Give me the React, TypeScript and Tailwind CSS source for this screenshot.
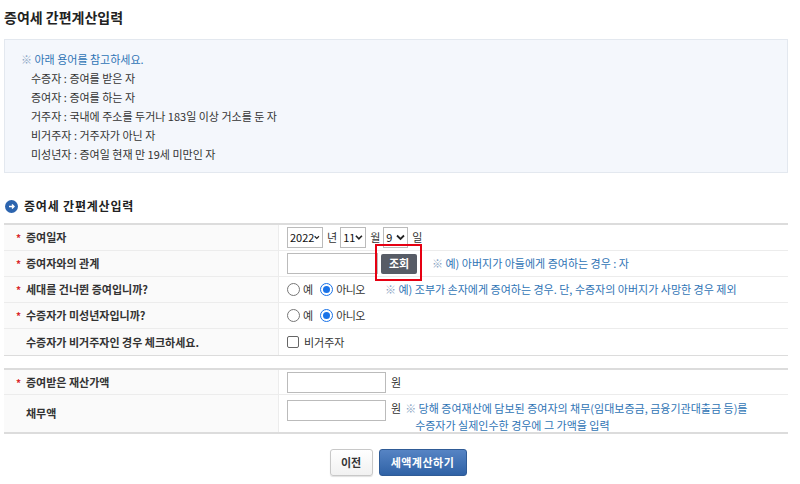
import React from 'react';

const FONT = '"Noto Sans CJK KR", "Noto Sans", sans-serif';

const TERMS: [string, string][] = [
  ['수증자', '증여를 받은 자'],
  ['증여자', '증여를 하는 자'],
  ['거주자', '국내에 주소를 두거나 183일 이상 거소를 둔 자'],
  ['비거주자', '거주자가 아닌 자'],
  ['미성년자', '증여일 현재 만 19세 미만인 자'],
];

function Star() {
  return <span className="text-[#d9262c] text-[10px] w-[9px] inline-block">*</span>;
}

function Label({ req, children }: { req?: boolean; children: React.ReactNode }) {
  return (
    <div className="w-[275px] shrink-0 bg-[#fafafa] border-r border-[#ececec] flex items-center pl-[12px] font-bold text-[11px] text-[#333]">
      {req ? <Star /> : <span className="w-[9px] inline-block" />}
      <span className="ml-[1px]">{children}</span>
    </div>
  );
}

function Select({ value, w }: { value: string; w: string }) {
  return (
    <div className={`${w} h-[21px] border border-[#bbb] bg-white flex items-center justify-between pl-[2px] pr-[2px] text-[11px] text-[#111]`}>
      <span>{value}</span>
      <svg width="9" height="7" viewBox="0 0 9 7">
        <path d="M1 1.5 L4.5 5 L8 1.5" stroke="#222" strokeWidth="1.8" fill="none" />
      </svg>
    </div>
  );
}

function Radio({ checked }: { checked?: boolean }) {
  return checked ? (
    <span className="w-[13px] h-[13px] rounded-full border border-[#1a73e8] flex items-center justify-center bg-white">
      <span className="w-[7px] h-[7px] rounded-full bg-[#1a73e8]" />
    </span>
  ) : (
    <span className="w-[13px] h-[13px] rounded-full border border-[#777] bg-white" />
  );
}

function YesNo() {
  return (
    <div className="flex items-center text-[11px] text-[#333]">
      <Radio />
      <span className="ml-[3px]">예</span>
      <span className="ml-[7px]"><Radio checked /></span>
      <span className="ml-[3px] tracking-[-0.5px]">아니오</span>
    </div>
  );
}

function Row({ children, h = 'h-[26px]', last }: { children: React.ReactNode; h?: string; last?: boolean }) {
  return <div className={`flex ${h} ${last ? '' : 'border-b border-[#ececec]'}`}>{children}</div>;
}

export default function App() {
  return (
    <div className="w-[800px] h-[484px] bg-white px-[4px] pt-[7px] text-[#333]" style={{ fontFamily: FONT }}>
      <h1 className="text-[14px] font-bold text-[#222] leading-[20px]">증여세 간편계산입력</h1>

      <div className="mt-[12px] w-[784px] h-[134px] border border-[#e3e8ef] bg-[#f4f7fc] pl-[16px] pt-[10px] text-[11px] leading-[19px]">
        <p className="text-[#2f74b5]">
          <span className="text-[#8aa4c4]">※</span> 아래 용어를 참고하세요.
        </p>
        {TERMS.map(([k, v]) => (
          <p key={k} className="pl-[10px] text-[#333]">
            {k} : {v}
          </p>
        ))}
      </div>

      <div className="mt-[24px] flex items-center h-[18px] pl-[1px]">
        <svg width="13" height="13" viewBox="0 0 13 13">
          <circle cx="6.5" cy="6.5" r="6.5" fill="#2c64ae" />
          <path d="M4 6.5 H9 M7 4.5 L9 6.5 L7 8.5" stroke="#fff" strokeWidth="1.4" fill="none" />
        </svg>
        <span className="ml-[6px] font-bold text-[12px] tracking-[0.8px] text-[#222]">증여세 간편계산입력</span>
      </div>

      <div className="mt-[8px] w-[784px] border-t-2 border-[#dcdcdc] border-b border-b-[#dcdcdc]">
        <Row>
          <Label req>증여일자</Label>
          <div className="flex items-center pl-[8px] gap-[4px] text-[11px]">
            <Select value="2022" w="w-[36px]" />
            <span className="tracking-[-1px]">년</span>
            <Select value="11" w="w-[26px]" />
            <span className="tracking-[-1px]">월</span>
            <Select value="9" w="w-[25px]" />
            <span>일</span>
          </div>
        </Row>
        <Row>
          <Label req>증여자와의 관계</Label>
          <div className="flex items-center pl-[8px] text-[11px]">
            <div className="w-[91px] h-[21px] border border-[#bbb] bg-white" />
            <div className="relative ml-[3px]">
              <button className="w-[36px] h-[20px] rounded-[2px] bg-[#575c66] text-white text-[11px] font-bold">조회</button>
              <div className="absolute left-[-6px] top-[-10px] w-[47px] h-[37px] border-2 border-[#e60012]" />
            </div>
            <span className="ml-[15px] text-[#2f74b5]">
              <span className="text-[#8aa4c4]">※</span> 예) 아버지가 아들에게 증여하는 경우 : 자
            </span>
          </div>
        </Row>
        <Row>
          <Label req>세대를 건너뛴 증여입니까?</Label>
          <div className="flex items-center pl-[8px] text-[11px]">
            <YesNo />
            <span className="ml-[20px] text-[#2f74b5]">
              <span className="text-[#8aa4c4]">※</span> 예) 조부가 손자에게 증여하는 경우. 단, 수증자의 아버지가 사망한 경우 제외
            </span>
          </div>
        </Row>
        <Row>
          <Label req>수증자가 미성년자입니까?</Label>
          <div className="flex items-center pl-[8px]">
            <YesNo />
          </div>
        </Row>
        <Row last>
          <Label>수증자가 비거주자인 경우 체크하세요.</Label>
          <div className="flex items-center pl-[8px] text-[11px]">
            <span className="w-[12px] h-[12px] border border-[#666] rounded-[2px] bg-white" />
            <span className="ml-[5px]">비거주자</span>
          </div>
        </Row>
      </div>

      <div className="mt-[12px] w-[784px] border-t-2 border-[#dcdcdc] border-b-2 border-b-[#dcdcdc]">
        <Row h="h-[25px]">
          <Label req>증여받은 재산가액</Label>
          <div className="flex items-center pl-[8px] text-[11px]">
            <div className="w-[99px] h-[21px] border border-[#bbb] bg-white" />
            <span className="ml-[5px]">원</span>
          </div>
        </Row>
        <Row h="h-[37px]" last>
          <Label>채무액</Label>
          <div className="flex items-start pl-[8px] pt-[5px] text-[11px]">
            <div className="w-[99px] h-[21px] border border-[#bbb] bg-white" />
            <span className="ml-[5px] leading-[17px]">원</span>
            <div className="ml-[4px] text-[#2f74b5] leading-[17px]">
              <p>
                <span className="text-[#8aa4c4]">※</span> 당해 증여재산에 담보된 증여자의 채무(임대보증금, 금융기관대출금 등)를
              </p>
              <p className="pl-[10px]">수증자가 실제인수한 경우에 그 가액을 입력</p>
            </div>
          </div>
        </Row>
      </div>

      <div className="mt-[15px] flex justify-center gap-[6px] pr-[4px]">
        <button className="w-[43px] h-[27px] border border-[#c8c8c8] rounded-[3px] bg-gradient-to-b from-white to-[#f1f1f1] text-[11px] font-bold text-[#333] shadow-[0_1px_1px_rgba(0,0,0,0.12)]">
          이전
        </button>
        <button className="w-[88px] h-[27px] border border-[#2f5b96] rounded-[3px] bg-gradient-to-b from-[#5684c4] to-[#2f62a6] text-[11px] font-bold tracking-[0.5px] text-white">
          세액계산하기
        </button>
      </div>
    </div>
  );
}
